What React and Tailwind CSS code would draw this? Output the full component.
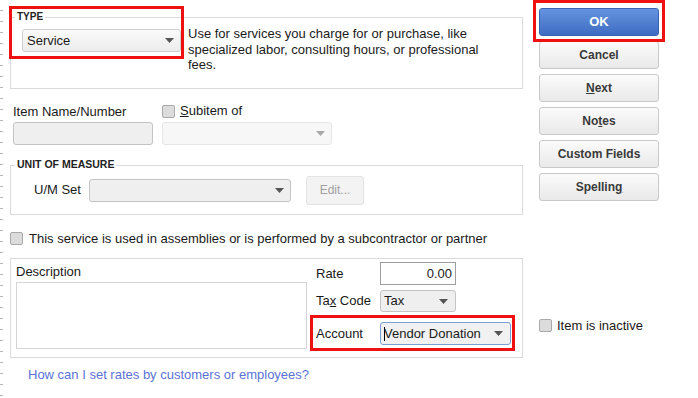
import React from "react";

const Arrow = ({ color = "#555" }) => (
  <svg width="9" height="5" viewBox="0 0 9 5" className="shrink-0">
    <path d="M0 0 H9 L4.5 5 Z" fill={color} />
  </svg>
);

const Check = () => (
  <span className="inline-block w-[13px] h-[13px] rounded-[2px] border border-[#a9a9a9] bg-[#dcdcdc] shrink-0" />
);

const Btn = ({ children }) => (
  <div className="h-[28px] w-[120px] flex items-center justify-center rounded-[3px] border border-[#c9c9c9] bg-gradient-to-b from-[#fbfbfb] to-[#e9e9e9] text-[12px] font-bold text-[#3a3a3a]">
    {children}
  </div>
);

export default function App() {
  return (
    <div
      className="relative w-[698px] h-[398px] bg-white flex overflow-hidden text-[#1a1a1a]"
      style={{ fontFamily: '"Liberation Sans", Arial, sans-serif' }}
    >
      {/* left tick ruler */}
      <div className="w-[3px] h-full bg-[repeating-linear-gradient(to_bottom,transparent_0px,transparent_10px,#b5b5b5_10px,#b5b5b5_11px)]" />

      {/* main column */}
      <div className="ml-[7px] w-[513px] flex flex-col">
        {/* TYPE group */}
        <div className="relative mt-[17px] h-[72px] border border-[#dadada] flex pl-[11px] pt-[11px]">
          <span className="absolute left-[4px] top-[-7px] bg-white px-[2px] text-[10px] font-bold leading-[12px] text-[#222]">
            TYPE
          </span>
          <div className="w-[159px] h-[23px] rounded-[3px] border border-[#cfcfcf] bg-gradient-to-b from-[#fafafa] to-[#ececec] flex items-center justify-between pl-[4px] pr-[6px] text-[13px]">
            <span>Service</span>
            <Arrow />
          </div>
          <p className="ml-[7px] mt-[-3px] w-[305px] text-[13px] leading-[15.5px] text-[#1a1a1a]">
            Use for services you charge for or purchase, like specialized labor, consulting hours, or professional fees.
          </p>
        </div>

        {/* Item name / subitem */}
        <div className="mt-[13px] flex text-[13px] leading-[16px]">
          <div className="w-[152px] pl-[3px] pt-[2px]">Item Name/Number</div>
          <div className="flex items-center gap-[5px]">
            <Check />
            <span>
              <span className="underline">S</span>ubitem of
            </span>
          </div>
        </div>
        <div className="mt-[2px] flex">
          <div className="ml-[3px] w-[140px] h-[23px] rounded-[3px] border border-[#c4c4c4] bg-[#efefef]" />
          <div className="ml-[9px] w-[170px] h-[23px] rounded-[3px] border border-[#e6e6e6] bg-[#f7f7f7] flex items-center justify-end pr-[6px]">
            <Arrow color="#a8a8a8" />
          </div>
        </div>

        {/* UOM group */}
        <div className="relative mt-[20px] h-[50px] border border-[#dadada] flex items-center">
          <span className="absolute left-[4px] top-[-8px] bg-white px-[2px] text-[10.5px] font-bold leading-[12px] text-[#222]">
            UNIT OF MEASURE
          </span>
          <span className="ml-[23px] w-[55px] text-[13px]">U/M Set</span>
          <div className="w-[202px] h-[23px] rounded-[3px] border border-[#c4c4c4] bg-[#efefef] flex items-center justify-end pr-[6px]">
            <Arrow />
          </div>
          <div className="ml-[15px] w-[58px] h-[29px] rounded-[3px] border border-[#e3e3e3] bg-[#f3f3f3] flex items-center justify-center text-[12px] text-[#a0a0a0]">
            Edit...
          </div>
        </div>

        {/* assemblies checkbox */}
        <div className="mt-[16px] flex items-center gap-[6px] text-[13px] leading-[15px]">
          <Check />
          <span>This service is used in assemblies or is performed by a subcontractor or partner</span>
        </div>

        {/* Description group */}
        <div className="mt-[12px] h-[100px] border border-[#dadada] flex">
          <div className="ml-[5px] flex flex-col">
            <span className="mt-[5px] text-[13px] leading-[15px]">Description</span>
            <div className="mt-[3px] w-[291px] h-[67px] border border-[#d5d5d5]" />
          </div>
          <div className="ml-[9px] flex flex-col text-[13px]">
            <div className="mt-[3px] flex items-center">
              <span className="w-[64px]">Rate</span>
              <div className="w-[76px] h-[23px] border border-[#9e9e9e] flex items-center justify-end pr-[3px] text-[13px]">
                0.00
              </div>
            </div>
            <div className="mt-[5px] flex items-center">
              <span className="w-[64px]">
                Ta<span className="underline">x</span> Code
              </span>
              <div className="w-[76px] h-[22px] rounded-[3px] border border-[#c4c4c4] bg-[#efefef] flex items-center justify-between pl-[3px] pr-[7px] text-[13px]">
                <span>Tax</span>
                <Arrow />
              </div>
            </div>
            <div className="mt-[10px] flex items-center">
              <span className="w-[64px]">Account</span>
              <div className="w-[131px] h-[23px] rounded-[3px] border border-[#7a9fd6] bg-[#f1f1f1] flex items-center justify-between pl-[3px] pr-[7px] text-[13px]">
                <span className="flex items-center">
                  <span className="inline-block w-px h-[14px] bg-black" />
                  <span className="ml-[-1px]">Vendor Donation</span>
                </span>
                <Arrow />
              </div>
            </div>
          </div>
        </div>

        <div className="mt-[9px] ml-[18px] text-[13px] leading-[15px] text-[#5b72d6]">
          How can I set rates by customers or employees?
        </div>
      </div>

      {/* right column */}
      <div className="ml-[16px] flex flex-col">
        <div className="mt-[8px] flex flex-col gap-[5px]">
          <div className="h-[28px] w-[120px] flex items-center justify-center rounded-[3px] border border-[#3a64b3] bg-gradient-to-b from-[#6494e0] to-[#3f6cc2] text-[13px] font-bold text-white">
            OK
          </div>
          <Btn>Cancel</Btn>
          <Btn>
            <span className="underline">N</span>ext
          </Btn>
          <Btn>
            No<span className="underline">t</span>es
          </Btn>
          <Btn>Custom Fields</Btn>
          <Btn>
            Spellin<span className="underline">g</span>
          </Btn>
        </div>
        <div className="mt-[117px] flex items-center gap-[5px] text-[13px] leading-[15px]">
          <Check />
          <span>Item is inactive</span>
        </div>
      </div>

      {/* red annotation rectangles */}
      <div className="absolute left-[9px] top-[6px] w-[175px] h-[53px] border-[3px] border-[#ee1111] pointer-events-none" />
      <div className="absolute left-[533px] top-[0px] w-[132px] h-[42px] border-[3px] border-[#ee1111] pointer-events-none" />
      <div className="absolute left-[310px] top-[315px] w-[205px] h-[36px] border-[3px] border-[#ee1111] pointer-events-none" />
    </div>
  );
}
